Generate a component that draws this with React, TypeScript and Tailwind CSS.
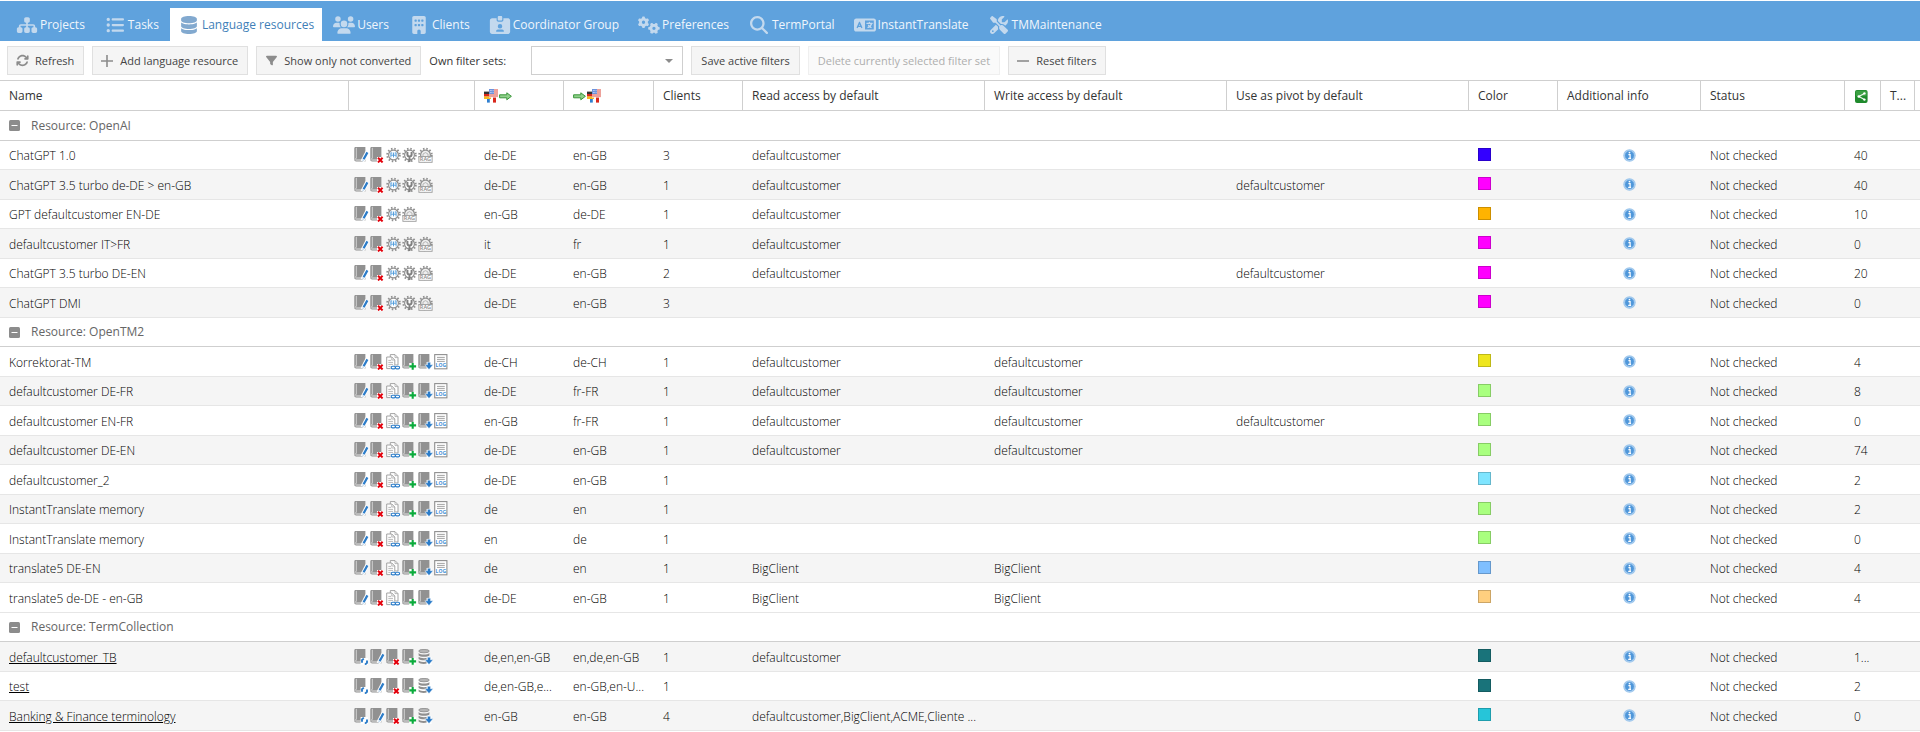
import { Fragment, useState } from 'react'
import type { ComponentType, ReactNode } from 'react'
import {
  FaArrowsRotate,
  FaBuilding,
  FaDatabase,
  FaFilter,
  FaGears,
  FaIdCardClip,
  FaLanguage,
  FaListUl,
  FaMagnifyingGlass,
  FaScrewdriverWrench,
  FaSitemap,
  FaUsers,
} from 'react-icons/fa6'

type Action =
  | 'edit'
  | 'delete'
  | 'model'
  | 'settings'
  | 'rag'
  | 'tasks'
  | 'import'
  | 'export'
  | 'log'
  | 'sync'
  | 'exportDb'

interface Resource {
  name: string
  actions: Action[]
  source: string
  target: string
  clients: number
  read?: string
  write?: string
  pivot?: string
  color: string
  count: string
  linked?: boolean
}

interface ResourceGroup {
  title: string
  resources: Resource[]
}

const TABS: { label: string; icon: ComponentType<{ className?: string }> }[] = [
  { label: 'Projects', icon: FaSitemap },
  { label: 'Tasks', icon: FaListUl },
  { label: 'Language resources', icon: FaDatabase },
  { label: 'Users', icon: FaUsers },
  { label: 'Clients', icon: FaBuilding },
  { label: 'Coordinator Group', icon: FaIdCardClip },
  { label: 'Preferences', icon: FaGears },
  { label: 'TermPortal', icon: FaMagnifyingGlass },
  { label: 'InstantTranslate', icon: FaLanguage },
  { label: 'TMMaintenance', icon: FaScrewdriverWrench },
]

const GPT: Action[] = ['edit', 'delete', 'model', 'settings', 'rag']
const TM: Action[] = ['edit', 'delete', 'tasks', 'import', 'export', 'log']
const TERM: Action[] = ['sync', 'edit', 'delete', 'import', 'exportDb']
const DC = 'defaultcustomer'

const GROUPS: ResourceGroup[] = [
  {
    title: 'Resource: OpenAI',
    resources: [
      { name: 'ChatGPT 1.0', actions: GPT, source: 'de-DE', target: 'en-GB', clients: 3, read: DC, color: '#3300ff', count: '40' },
      { name: 'ChatGPT 3.5 turbo de-DE > en-GB', actions: GPT, source: 'de-DE', target: 'en-GB', clients: 1, read: DC, pivot: DC, color: '#ff00ff', count: '40' },
      { name: 'GPT defaultcustomer EN-DE', actions: ['edit', 'delete', 'model', 'rag'], source: 'en-GB', target: 'de-DE', clients: 1, read: DC, color: '#ffb300', count: '10' },
      { name: 'defaultcustomer IT>FR', actions: GPT, source: 'it', target: 'fr', clients: 1, read: DC, color: '#ff00ff', count: '0' },
      { name: 'ChatGPT 3.5 turbo DE-EN', actions: GPT, source: 'de-DE', target: 'en-GB', clients: 2, read: DC, pivot: DC, color: '#ff00ff', count: '20' },
      { name: 'ChatGPT DMI', actions: GPT, source: 'de-DE', target: 'en-GB', clients: 3, color: '#ff00ff', count: '0' },
    ],
  },
  {
    title: 'Resource: OpenTM2',
    resources: [
      { name: 'Korrektorat-TM', actions: TM, source: 'de-CH', target: 'de-CH', clients: 1, read: DC, write: DC, color: '#eee61e', count: '4' },
      { name: 'defaultcustomer DE-FR', actions: TM, source: 'de-DE', target: 'fr-FR', clients: 1, read: DC, write: DC, color: '#a9ff7f', count: '8' },
      { name: 'defaultcustomer EN-FR', actions: TM, source: 'en-GB', target: 'fr-FR', clients: 1, read: DC, write: DC, pivot: DC, color: '#a9ff7f', count: '0' },
      { name: 'defaultcustomer DE-EN', actions: TM, source: 'de-DE', target: 'en-GB', clients: 1, read: DC, write: DC, color: '#a9ff7f', count: '74' },
      { name: 'defaultcustomer_2', actions: TM, source: 'de-DE', target: 'en-GB', clients: 1, color: '#7fe5ff', count: '2' },
      { name: 'InstantTranslate memory', actions: TM, source: 'de', target: 'en', clients: 1, color: '#a9ff7f', count: '2' },
      { name: 'InstantTranslate memory', actions: TM, source: 'en', target: 'de', clients: 1, color: '#a9ff7f', count: '0' },
      { name: 'translate5 DE-EN', actions: TM, source: 'de', target: 'en', clients: 1, read: 'BigClient', write: 'BigClient', color: '#7fbfff', count: '4' },
      { name: 'translate5 de-DE - en-GB', actions: ['edit', 'delete', 'tasks', 'import', 'export'], source: 'de-DE', target: 'en-GB', clients: 1, read: 'BigClient', write: 'BigClient', color: '#ffcf7f', count: '4' },
    ],
  },
  {
    title: 'Resource: TermCollection',
    resources: [
      { name: 'defaultcustomer_TB', actions: TERM, source: 'de,en,en-GB', target: 'en,de,en-GB', clients: 1, read: DC, color: '#19737a', count: '1...', linked: true },
      { name: 'test', actions: TERM, source: 'de,en-GB,e...', target: 'en-GB,en-U...', clients: 1, color: '#19737a', count: '2', linked: true },
      { name: 'Banking & Finance terminology', actions: TERM, source: 'en-GB', target: 'en-GB', clients: 4, read: 'defaultcustomer,BigClient,ACME,Cliente ...', color: '#26c5d9', count: '0', linked: true },
    ],
  },
]

const ACTION_LABELS: Record<Action, string> = {
  edit: 'Edit',
  delete: 'Delete',
  model: 'Fine-tune model',
  settings: 'Model settings',
  rag: 'RAG',
  tasks: 'Assigned tasks',
  import: 'Import',
  export: 'Export',
  log: 'Log',
  sync: 'Synchronize',
  exportDb: 'Export collection',
}

function Book() {
  return (
    <>
      <path d="M1.6 0H11.4V14.4H2.2C1 14.4 .3 13.8 .3 12.8V1.4C.3 .6 .8 0 1.6 0Z" fill="#919191" />
      <path d="M2.3 .8V11.4C1.3 11.5 1 12 1 12.6" fill="none" stroke="#d8d8d8" strokeWidth=".9" />
      <path d="M1.5 13H10.6" stroke="#ededed" strokeWidth=".9" />
    </>
  )
}

function Gear({ half }: { half?: boolean }) {
  return (
    <>
      <circle cx="7.5" cy="8" r="4.9" fill={half ? '#eee' : '#fff'} stroke="#8f8f8f" strokeWidth="1.2" />
      <circle cx="7.5" cy="8" r="6.3" fill="none" stroke="#8f8f8f" strokeWidth="1.9" strokeDasharray="1.5 1.8" />
    </>
  )
}

function DownArrow() {
  return (
    <path
      d="M9.4 8.2H12.6V10.8H15.2L11 15.6L6.8 10.8H9.4Z"
      fill="#2b7cc9"
      stroke="#fff"
      strokeWidth=".5"
    />
  )
}

const ACTION_DRAWINGS: Record<Action, ReactNode> = {
  edit: (
    <>
      <Book />
      <path d="M8.4 14.4L13.4 5" stroke="#fff" strokeWidth="4" />
      <path d="M9.6 12.3L13.4 5.4" stroke="#2b7cc9" strokeWidth="2.2" />
      <path d="M8.2 14.8L8.8 12L10.4 12.9Z" fill="#b5cfe8" />
    </>
  ),
  delete: (
    <>
      <Book />
      <path d="M7 10H13.5V16H7Z" fill="#fff" />
      <path d="M8 10.8L12.6 15.4M12.6 10.8L8 15.4" stroke="#e3000b" strokeWidth="2" />
    </>
  ),
  model: (
    <>
      <Gear />
      <path d="M4.9 5.6V10.4M7.5 5.6V10.4M10.1 5.6V10.4M4.9 6H6.3M8.7 6H10.1M4.9 8.2H10.1" fill="none" stroke="#4a98da" strokeWidth=".9" />
    </>
  ),
  settings: (
    <>
      <Gear />
      <path d="M5.4 5V7.4C5.4 8.6 6.2 9.4 7.5 9.4S9.6 8.6 9.6 7.4V5M7.5 9V15" fill="none" stroke="#808080" strokeWidth="2" />
    </>
  ),
  rag: (
    <>
      <Gear half />
      <path d="M5 9V7L7.5 5.6L10 7V9" fill="none" stroke="#aaa" strokeWidth=".8" />
      <rect x=".9" y="9.5" width="13.2" height="5.8" fill="#fff" stroke="#9a9a9a" strokeWidth=".9" />
      <text x="7.5" y="14.4" textAnchor="middle" fontSize="5.6" fontWeight="600" fill="#8a8a8a">
        RAG
      </text>
    </>
  ),
  tasks: (
    <>
      <path d="M4.3 .6H9L12 3.6V11H4.3Z" fill="#fff" stroke="#9a9a9a" strokeWidth=".9" />
      <path d="M.7 3H5.8L8.8 6V14.6H.7Z" fill="#fff" stroke="#9a9a9a" strokeWidth=".9" />
      <path d="M2.3 6.4H5.2M2.3 8.4H7M2.3 10.4H7M2.3 12.4H5M9 .8V3.6H12M5.8 3V6H8.8" fill="none" stroke="#a8a8a8" strokeWidth=".8" />
      <path d="M4.6 11.6H14V16H4.6Z" fill="#fff" />
      <rect x="5.2" y="12.3" width="4.2" height="2.6" rx="1.3" fill="none" stroke="#2b7cc9" strokeWidth="1.1" />
      <rect x="9.4" y="12.3" width="4.2" height="2.6" rx="1.3" fill="none" stroke="#2b7cc9" strokeWidth="1.1" />
    </>
  ),
  import: (
    <>
      <Book />
      <path d="M7.2 9H14V15.6H7.2Z" fill="#fff" />
      <path d="M10.7 9V15.8M7.3 12.4H14.1" stroke="#0bab3c" strokeWidth="2.1" />
    </>
  ),
  export: (
    <>
      <Book />
      <path d="M8.6 8H13.6V16H8.6Z" fill="#fff" />
      <DownArrow />
    </>
  ),
  log: (
    <>
      <rect x=".7" y=".6" width="12.2" height="14.2" fill="#fff" stroke="#8f8f8f" strokeWidth="1.1" />
      <path d="M3 3.4H10.8M3 5.4H10.8M3 7.4H10.8" stroke="#999" strokeWidth=".9" />
      <text x="6.8" y="13.4" textAnchor="middle" fontSize="5" fontWeight="700" fill="#3f8fd6">
        LOG
      </text>
    </>
  ),
  sync: (
    <>
      <Book />
      <path d="M6.6 9H14V16H6.6Z" fill="#fff" />
      <path d="M8 13.8V11.2L9.8 9.6M13 11.4V13.8L11 15.6" fill="none" stroke="#2b7cc9" strokeWidth="1.9" />
    </>
  ),
  exportDb: (
    <>
      <ellipse cx="6" cy="2.1" rx="5.3" ry="1.7" fill="#b5b5b5" stroke="#8f8f8f" strokeWidth=".9" />
      <path d="M.6 4C2 6 10 6 11.4 4V6.4C10 8.2 2 8.2 .6 6.4ZM.6 7.8C2 9.6 10 9.6 11.4 7.8V10C10 11.8 2 11.8 .6 10ZM.6 11.4C2 13 8 13.2 9 12.6V14.6C6 15.4 1.6 15 .6 13.6Z" fill="#8f8f8f" />
      <path d="M8.6 8H13.6V16H8.6Z" fill="#fff" />
      <DownArrow />
    </>
  ),
}

function ActionButton({ action }: { action: Action }) {
  return (
    <button type="button" className="block size-4" aria-label={ACTION_LABELS[action]}>
      <svg viewBox="0 0 16 16" className="size-4">
        {ACTION_DRAWINGS[action]}
      </svg>
    </button>
  )
}

function Flags() {
  return (
    <svg viewBox="0 0 14 14" className="size-[14px]">
      <path d="M3 8H12V13.6H3Z" fill="#fff" />
      <path d="M3 8H5.8V13.6H3Z" fill="#2f7fd0" />
      <path d="M9 8H12V13.6H9Z" fill="#d9271c" />
      <path d="M0 2.6H7V5.2H0Z" fill="#333" />
      <path d="M0 5H7V7.6H0Z" fill="#d9271c" />
      <path d="M0 7.4H7V10H0Z" fill="#f5b921" />
      <path d="M5 0H14V8.6H5Z" fill="#fbe9e7" />
      <path d="M5 1H14M5 3H14M5 5H14M5 7H14" stroke="#df5a4e" strokeWidth="1" />
      <path d="M5 0H10V5H5Z" fill="#6d93dd" />
      <path d="M6 1.5H9.5M6 3.5H9.5" stroke="#dbe6fa" strokeWidth=".8" strokeDasharray=".8 .6" />
    </svg>
  )
}

function GreenArrow() {
  return (
    <svg viewBox="0 0 13 14" className="h-[14px] w-[13px]">
      <path d="M.6 5.8H7.8V3.8L12.4 7.3L7.8 10.8V8.8H.6Z" fill="#8fd08a" stroke="#3a963a" strokeWidth="1" />
    </svg>
  )
}

function ShareIcon() {
  return (
    <svg viewBox="0 0 13 13" className="mt-px ml-px size-[13px]" role="img" aria-label="Assigned tasks">
      <rect width="12.6" height="13" rx="2" fill="#1f8a2c" />
      <rect x=".8" y=".8" width="11" height="5.4" rx="1.4" fill="#3ba043" />
      <path d="M9.4 3.4L3.8 6.5L9.4 9.6" fill="none" stroke="#e9f6ea" strokeWidth="1.2" />
      <circle cx="9.4" cy="3.4" r="1.2" fill="#fff" />
      <circle cx="3.8" cy="6.5" r="1.3" fill="#fff" />
      <circle cx="9.4" cy="9.6" r="1.2" fill="#fff" />
    </svg>
  )
}

function InfoIcon() {
  return (
    <svg viewBox="0 0 13 13" className="size-[13px]">
      <circle cx="6.5" cy="6.5" r="6.2" fill="#9cc6ec" />
      <circle cx="6.5" cy="6.5" r="4.9" fill="#4f97da" stroke="#cfe3f6" strokeWidth=".6" />
      <path d="M5.4 5.6H7.1V9.3M5.2 9.4H8.1" fill="none" stroke="#fff" strokeWidth="1.2" />
      <circle cx="6.5" cy="3.6" r=".9" fill="#fff" />
    </svg>
  )
}

interface ToolButtonProps {
  icon?: ReactNode
  disabled?: boolean
  children: ReactNode
}

function ToolButton({ icon, disabled, children }: ToolButtonProps) {
  return (
    <button
      type="button"
      disabled={disabled}
      className={`flex h-[29px] items-center border pr-[9px] whitespace-nowrap ${icon ? 'gap-[6px] pl-[7px]' : 'pl-[9px]'} ${
        disabled
          ? 'border-[#efefef] bg-[#fafafa] text-[#aeaeae]'
          : 'border-[#e0e0e0] bg-[#f5f5f5] text-[#444]'
      }`}
    >
      {icon && <span className="flex w-[14px] justify-center text-[#8c8c8c]">{icon}</span>}
      {children}
    </button>
  )
}

function HeaderCell({ children }: { children?: ReactNode }) {
  return (
    <th
      scope="col"
      className="h-[31px] truncate border-y border-r border-[#cfcfcf] pr-1 pl-[9px] text-left font-normal text-[#333]"
    >
      {children}
    </th>
  )
}

function Cell({ children }: { children?: ReactNode }) {
  return <td className="truncate border-b border-[#e6e6e6] pt-0.5 pr-1 pl-[9px]">{children}</td>
}

export default function App() {
  const [activeTab, setActiveTab] = useState('Language resources')
  const [collapsed, setCollapsed] = useState<string[]>([])

  const toggleGroup = (title: string) =>
    setCollapsed((prev) =>
      prev.includes(title) ? prev.filter((t) => t !== title) : [...prev, title],
    )

  let rowNumber = 0

  return (
    <div className="bg-white font-['Open_Sans',sans-serif] text-xs leading-4 text-black">
      <nav className="mt-px flex h-10 items-end gap-[3px] bg-[#5fa2dd] pl-2" role="tablist">
        {TABS.map(({ label, icon: Icon }) => {
          const active = label === activeTab
          return (
            <button
              key={label}
              type="button"
              role="tab"
              aria-selected={active}
              onClick={() => setActiveTab(label)}
              className={`flex h-[33px] items-center gap-0.5 px-2 whitespace-nowrap ${
                active ? 'bg-white text-[#3f7fb8]' : 'text-[#f0f6fc]'
              }`}
            >
              <span className={active ? 'text-[#82a9cf]' : 'text-[#c3d9ee]'}>
                <Icon className="h-[18px] w-[22px]" />
              </span>
              {label}
            </button>
          )
        })}
      </nav>

      <div className="flex h-[39px] items-center gap-2 pl-[7px] text-[11px]">
        <ToolButton icon={<FaArrowsRotate className="size-[13px]" />}>Refresh</ToolButton>
        <ToolButton
          icon={
            <svg viewBox="0 0 12 12" className="size-3">
              <path d="M6 0V12M0 6H12" stroke="currentColor" strokeWidth="1.6" />
            </svg>
          }
        >
          Add language resource
        </ToolButton>
        <ToolButton icon={<FaFilter className="size-[11px]" />}>Show only not converted</ToolButton>
        <label htmlFor="filter-set" className="w-[94px] text-[#333]">
          Own filter sets:
        </label>
        <div className="relative">
          <select
            id="filter-set"
            className="block h-[29px] w-[152px] appearance-none border border-[#cfcfcf] bg-white px-2"
          >
            <option value="" />
          </select>
          <svg
            viewBox="0 0 8 4"
            className="pointer-events-none absolute top-[13px] right-[10px] h-1 w-2 text-[#8c8c8c]"
          >
            <path d="M0 0H8L4 4Z" fill="currentColor" />
          </svg>
        </div>
        <ToolButton>Save active filters</ToolButton>
        <ToolButton disabled>Delete currently selected filter set</ToolButton>
        <ToolButton
          icon={
            <svg viewBox="0 0 12 12" className="size-3">
              <path d="M0 6H12" stroke="currentColor" strokeWidth="1.6" />
            </svg>
          }
        >
          Reset filters
        </ToolButton>
      </div>

      <table className="w-full table-fixed border-separate border-spacing-0">
        <colgroup>
          <col className="w-[349px]" />
          <col className="w-[126px]" />
          <col className="w-[89px]" />
          <col className="w-[90px]" />
          <col className="w-[89px]" />
          <col />
          <col />
          <col />
          <col className="w-[89px]" />
          <col className="w-[143px]" />
          <col className="w-[144px]" />
          <col className="w-[36px]" />
          <col className="w-[34px]" />
          <col className="w-[5px]" />
        </colgroup>
        <thead>
          <tr>
            <HeaderCell>Name</HeaderCell>
            <HeaderCell />
            <HeaderCell>
              <span className="flex gap-px" role="img" aria-label="Source languages">
                <Flags />
                <GreenArrow />
              </span>
            </HeaderCell>
            <HeaderCell>
              <span className="flex gap-px" role="img" aria-label="Target languages">
                <GreenArrow />
                <Flags />
              </span>
            </HeaderCell>
            <HeaderCell>Clients</HeaderCell>
            <HeaderCell>Read access by default</HeaderCell>
            <HeaderCell>Write access by default</HeaderCell>
            <HeaderCell>Use as pivot by default</HeaderCell>
            <HeaderCell>Color</HeaderCell>
            <HeaderCell>Additional info</HeaderCell>
            <HeaderCell>Status</HeaderCell>
            <HeaderCell>
              <ShareIcon />
            </HeaderCell>
            <HeaderCell>T...</HeaderCell>
            <th className="border-y border-[#cfcfcf] p-0" />
          </tr>
        </thead>
        <tbody className="font-light">
          {GROUPS.map((group) => {
            const open = !collapsed.includes(group.title)
            return (
              <Fragment key={group.title}>
                <tr className="odd:h-[30px] even:h-[29px]">
                  <td colSpan={14} className="border-b border-[#cfcfcf] p-0">
                    <button
                      type="button"
                      aria-expanded={open}
                      onClick={() => toggleGroup(group.title)}
                      className="flex items-center gap-[11px] pl-[9px] font-normal text-[#666]"
                    >
                      <svg viewBox="0 0 11 11" className="size-[11px]">
                        <rect width="11" height="11" rx="1.5" fill="#8c8c8c" />
                        <path d={open ? 'M2.5 5.5H8.5' : 'M2.5 5.5H8.5M5.5 2.5V8.5'} stroke="#fff" strokeWidth="1" />
                      </svg>
                      {group.title}
                    </button>
                  </td>
                </tr>
                {open &&
                  group.resources.map((r, i) => {
                    rowNumber += 1
                    return (
                      <tr
                        key={i}
                        className={`odd:h-[30px] even:h-[29px] ${rowNumber % 2 === 0 ? 'bg-[#f5f5f5]' : 'bg-white'}`}
                      >
                        <Cell>
                          {r.linked ? (
                            <a href="#term-collection" className="text-black underline">
                              {r.name}
                            </a>
                          ) : (
                            r.name
                          )}
                        </Cell>
                        <td className="border-b border-[#e6e6e6] pl-[5px]">
                          <div className="flex">
                            {r.actions.map((action) => (
                              <ActionButton key={action} action={action} />
                            ))}
                          </div>
                        </td>
                        <Cell>{r.source}</Cell>
                        <Cell>{r.target}</Cell>
                        <Cell>{r.clients}</Cell>
                        <Cell>{r.read}</Cell>
                        <Cell>{r.write}</Cell>
                        <Cell>{r.pivot}</Cell>
                        <td className="border-b border-[#e6e6e6] pb-0.5 pl-[9px]">
                          <div
                            className="size-[13px] border border-black/20"
                            style={{ backgroundColor: r.color }}
                          />
                        </td>
                        <td className="border-b border-[#e6e6e6]">
                          <button type="button" className="mx-auto block" aria-label="Additional info">
                            <InfoIcon />
                          </button>
                        </td>
                        <Cell>Not checked</Cell>
                        <Cell>{r.count}</Cell>
                        <Cell />
                        <td className="border-b border-[#e6e6e6]" />
                      </tr>
                    )
                  })}
              </Fragment>
            )
          })}
        </tbody>
      </table>
    </div>
  )
}
